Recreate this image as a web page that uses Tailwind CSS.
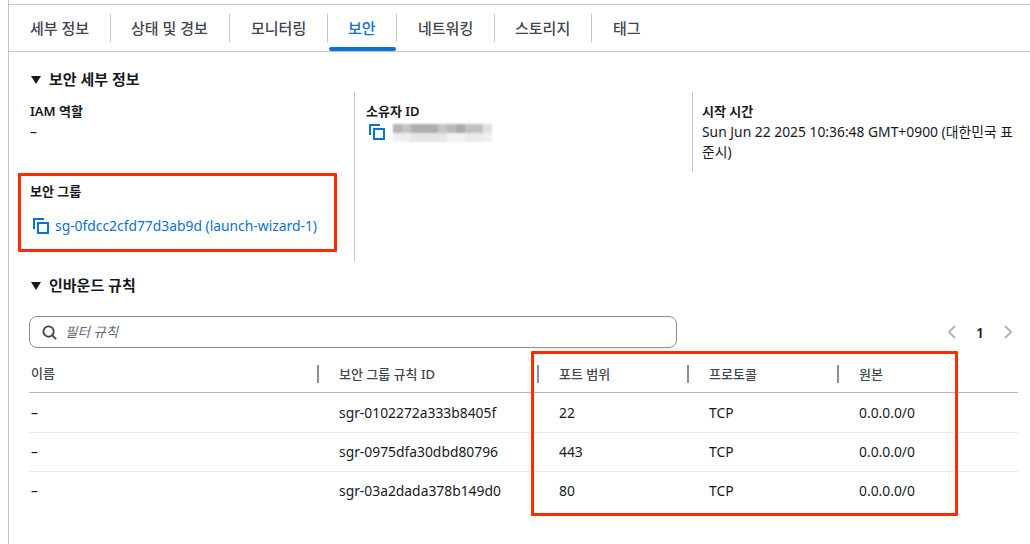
<!DOCTYPE html>
<html lang="ko">
<head>
<meta charset="utf-8">
<script src="https://cdn.jsdelivr.net/npm/@tailwindcss/browser@4"></script>
</head>
<body class="bg-white">
<div class="relative w-[1030px] h-[544px] overflow-hidden bg-white font-['Noto_Sans','Noto_Sans_CJK_KR',sans-serif] text-[13.85px] text-[#16191f]">
  <div class="ml-[8px] h-[544px] border-l border-[#c6c6cd] pt-[4px]">
    <div class="border-t border-b border-[#c6c6cd] h-[48px] flex items-start pt-[9px] text-[15px] text-[#424650] font-medium">
      <div class="h-[28px] flex items-center pl-[21px] pr-[21px] border-r border-[#c6c6cd] w-[102px] whitespace-nowrap">세부 정보</div>
      <div class="h-[28px] flex items-center pl-[20px] w-[119px] border-r border-[#c6c6cd] whitespace-nowrap">상태 및 경보</div>
      <div class="h-[28px] flex items-center pl-[21px] w-[98px] border-r border-[#c6c6cd] whitespace-nowrap">모니터링</div>
      <div class="relative h-[28px] flex items-center pl-[20px] w-[69px] border-r border-[#c6c6cd] text-[#0972d3] whitespace-nowrap">보안
        <div class="absolute left-[1px] right-0 top-[33px] h-[4px] rounded-[2px] bg-[#0972d3]"></div>
      </div>
      <div class="h-[28px] flex items-center pl-[21px] w-[98px] border-r border-[#c6c6cd] whitespace-nowrap">네트워킹</div>
      <div class="h-[28px] flex items-center pl-[20px] w-[97px] border-r border-[#c6c6cd] whitespace-nowrap">스토리지</div>
      <div class="h-[28px] flex items-center pl-[21px]">태그</div>
    </div>

    <div class="pl-[21px] pr-[12px]">
      <div class="h-[40px] flex items-center gap-[8px] pt-[15px] pl-[1px] text-[15px] font-semibold">
        <svg width="10" height="8" viewBox="0 0 10 8" class="shrink-0"><path d="M0 0h10L5 8z" fill="#16191f"/></svg>
        <span>보안 세부 정보</span>
      </div>
      <div class="grid grid-cols-[325px_337px_1fr] h-[169px]">
        <div class="border-r border-[#c6c6cd] flex flex-col">
          <div class="pt-[9px] h-[87px]">
            <div class="font-semibold leading-[21px] text-[13px]">IAM 역할</div>
            <div class="leading-[20px]">–</div>
          </div>
          <div class="pt-[2px]">
            <div class="font-semibold leading-[20px] text-[13px]">보안 그룹</div>
            <div class="mt-[15px] flex items-center gap-[6px] pl-[3px] text-[#0972d3] leading-[20px]">
              <svg width="16" height="16" viewBox="0 0 16 16" fill="none" stroke="#0972d3" stroke-width="2" class="shrink-0"><path d="M1 11V1h10"/><rect x="5" y="5" width="10" height="10"/></svg>
              <span class="whitespace-nowrap">sg-0fdcc2cfd77d3ab9d (launch-wizard-1)</span>
            </div>
          </div>
        </div>
        <div class="pl-[11px] pt-[9px] h-[169px]">
          <div class="font-semibold leading-[21px] text-[13px]">소유자 ID</div>
          <div class="flex items-start gap-[8px] pl-[3px]">
            <svg width="16" height="16" viewBox="0 0 16 16" fill="none" stroke="#0972d3" stroke-width="2" class="shrink-0 mt-[2px]"><path d="M1 11V1h10"/><rect x="5" y="5" width="10" height="10"/></svg>
            <div class="w-[106px] h-[18px] mt-[2px] flex flex-col blur-[1px]">
              <div class="h-[9px] flex">
                <div class="w-[9px] bg-[#b4b4b6]"></div><div class="w-[9px] bg-[#c4c4c6]"></div><div class="w-[27px] bg-[#adadaf]"></div><div class="w-[9px] bg-[#c6c6c8]"></div><div class="w-[9px] bg-[#b8b8ba]"></div><div class="w-[9px] bg-[#a9a9ab]"></div><div class="w-[18px] bg-[#c2c2c4]"></div><div class="w-[9px] bg-[#e2e2e3]"></div>
              </div>
              <div class="h-[9px] flex">
                <div class="w-[18px] bg-[#eeeeef]"></div><div class="w-[36px] bg-[#e6e6e7]"></div><div class="w-[18px] bg-[#f2f2f3]"></div><div class="w-[18px] bg-[#eaeaeb]"></div><div class="w-[9px] bg-[#f0f0f1]"></div>
              </div>
            </div>
          </div>
        </div>
        <div class="relative pl-[10px] pt-[9px]">
          <div class="absolute left-0 top-0 h-[80px] border-l border-[#c6c6cd]"></div>
          <div class="font-semibold leading-[21px] text-[13px]">시작 시간</div>
          <div class="leading-[20px]">Sun Jun 22 2025 10:36:48 GMT+0900 (대한민국 표준시)</div>
        </div>
      </div>

      <div class="h-[48px] flex items-center gap-[8px] pt-[1px] pl-[1px] text-[15px] font-semibold">
        <svg width="10" height="8" viewBox="0 0 10 8" class="shrink-0"><path d="M0 0h10L5 8z" fill="#16191f"/></svg>
        <span>인바운드 규칙</span>
      </div>

      <div class="mt-[7px] -ml-[1px] flex items-center justify-between h-[32px]">
        <div class="w-[648px] h-[32px] rounded-[8px] border border-[#8c8c94] flex items-center pl-[12px] gap-[8px]">
          <svg width="15" height="15" viewBox="0 0 16 16" fill="none" stroke="#424650" stroke-width="2" class="shrink-0"><circle cx="7" cy="7" r="5.5"/><path d="M11 11l4 4"/></svg>
          <span class="italic text-[#5f6b7a] text-[13.5px]">필터 규칙</span>
        </div>
        <div class="flex items-center gap-[19px] pr-[5px]">
          <svg width="10" height="14" viewBox="0 0 10 14" fill="none" stroke="#b4b4bb" stroke-width="2"><path d="M8 1L2 7l6 6"/></svg>
          <span class="font-semibold text-[14px]">1</span>
          <svg width="10" height="14" viewBox="0 0 10 14" fill="none" stroke="#b4b4bb" stroke-width="2"><path d="M2 1l6 6-6 6"/></svg>
        </div>
      </div>

      <table class="w-[989px] mt-[10px] -ml-[1px] border-collapse table-fixed">
        <colgroup><col class="w-[288px]"><col class="w-[220px]"><col class="w-[150px]"><col class="w-[150px]"><col class="w-[181px]"></colgroup>
        <thead>
          <tr class="h-[34px] border-b border-[#b4b4bb] text-left text-[#424650] text-[13px]">
            <th class="p-0 pb-[2px] font-medium"><div class="pl-[2px]">이름</div></th>
            <th class="p-0 pb-[2px] font-medium"><div class="border-l-2 border-[#8c8c94] pl-[20px] h-[18px] leading-[18px]">보안 그룹 규칙 ID</div></th>
            <th class="p-0 pb-[2px] font-medium"><div class="border-l-2 border-[#8c8c94] pl-[20px] h-[18px] leading-[18px]">포트 범위</div></th>
            <th class="p-0 pb-[2px] font-medium"><div class="border-l-2 border-[#8c8c94] pl-[20px] h-[18px] leading-[18px]">프로토콜</div></th>
            <th class="p-0 pb-[2px] font-medium"><div class="border-l-2 border-[#8c8c94] pl-[20px] h-[18px] leading-[18px]">원본</div></th>
          </tr>
        </thead>
        <tbody>
          <tr class="h-[40px] border-b border-[#e9ebed]">
            <td class="p-0 pt-[2px] pl-[2px]">–</td><td class="p-0 pt-[2px] pl-[22px]">sgr-0102272a333b8405f</td><td class="p-0 pt-[2px] pl-[22px]">22</td><td class="p-0 pt-[2px] pl-[22px]">TCP</td><td class="p-0 pt-[2px] pl-[22px]">0.0.0.0/0</td>
          </tr>
          <tr class="h-[39px] border-b border-[#e9ebed]">
            <td class="p-0 pt-[2px] pl-[2px]">–</td><td class="p-0 pt-[2px] pl-[22px]">sgr-0975dfa30dbd80796</td><td class="p-0 pt-[2px] pl-[22px]">443</td><td class="p-0 pt-[2px] pl-[22px]">TCP</td><td class="p-0 pt-[2px] pl-[22px]">0.0.0.0/0</td>
          </tr>
          <tr class="h-[39px]">
            <td class="p-0 pt-[2px] pl-[2px]">–</td><td class="p-0 pt-[2px] pl-[22px]">sgr-03a2dada378b149d0</td><td class="p-0 pt-[2px] pl-[22px]">80</td><td class="p-0 pt-[2px] pl-[22px]">TCP</td><td class="p-0 pt-[2px] pl-[22px]">0.0.0.0/0</td>
          </tr>
        </tbody>
      </table>
    </div>
  </div>
  <div class="absolute left-[18px] top-[173px] w-[319px] h-[79px] border-[3px] border-[#ff2a00] rounded-[1px]"></div>
  <div class="absolute left-[531px] top-[351px] w-[427px] h-[165px] border-[3px] border-[#ff2a00] rounded-[1px]"></div>
</div>
</body>
</html>
